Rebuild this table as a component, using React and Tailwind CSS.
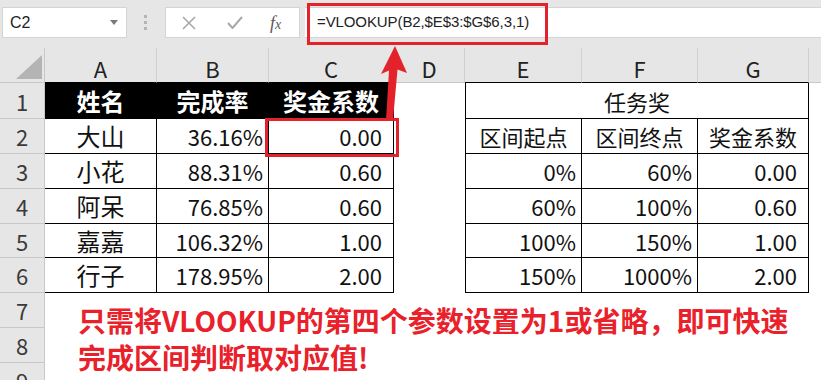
const COLS = [
  { key: 'A', w: 'w-[112px]' },
  { key: 'B', w: 'w-[112px]' },
  { key: 'C', w: 'w-[125px]' },
  { key: 'D', w: 'w-[71px]' },
  { key: 'E', w: 'w-[117px]' },
  { key: 'F', w: 'w-[116px]' },
  { key: 'G', w: 'w-[111px]' },
];

const HEIGHTS = ['h-[36px]', 'h-[35px]', 'h-[35px]', 'h-[35px]', 'h-[34px]', 'h-[35px]', 'h-[35px]', 'h-[35px]', 'h-[35px]'];

const people = [
  ['大山', '36.16%', '0.00'],
  ['小花', '88.31%', '0.60'],
  ['阿呆', '76.85%', '0.60'],
  ['嘉嘉', '106.32%', '1.00'],
  ['行子', '178.95%', '2.00'],
];

const bands = [
  ['0%', '60%', '0.00'],
  ['60%', '100%', '0.60'],
  ['100%', '150%', '1.00'],
  ['150%', '1000%', '2.00'],
];

function RowHead({ n, h }) {
  return (
    <div className={`${h} w-[45px] shrink-0 bg-[#e6e6e6] border-r border-b border-[#c8c8c8] flex items-center justify-center text-[22px] text-[#3a3a3a] leading-none`}>
      {n}
    </div>
  );
}

function Cell({ w, children, align = 'center', pad = '', extra = '' }) {
  const justify = align === 'right' ? 'justify-end' : 'justify-center';
  return (
    <div className={`${w} shrink-0 h-full flex items-center ${justify} ${pad} border-r border-b border-black leading-none ${extra}`}>
      {children}
    </div>
  );
}

function Blank({ w }) {
  return <div className={`${w} shrink-0 h-full`} />;
}

export default function App() {
  return (
    <div className="w-[821px] h-[380px] relative overflow-hidden bg-white" style={{ fontFamily: '"Noto Sans CJK SC", "Noto Sans", sans-serif' }}>
      {/* toolbar */}
      <div className="h-[48px] bg-[#e6e6e6] flex items-start pt-[7px]">
        <div className="ml-[2px] w-[125px] h-[31px] bg-white border border-[#d4d4d4] flex items-center justify-between pl-[7px] pr-[8px]">
          <span className="text-[16px] text-[#222] font-['Liberation_Sans',sans-serif]">C2</span>
          <svg width="8" height="5" viewBox="0 0 8 5"><path d="M0 0h8L4 5z" fill="#7a7a7a" /></svg>
        </div>
        <div className="ml-[17px] mt-[8px] flex flex-col gap-[3px]">
          <div className="w-[3px] h-[3px] bg-[#b4b4b4]" />
          <div className="w-[3px] h-[3px] bg-[#b4b4b4]" />
          <div className="w-[3px] h-[3px] bg-[#b4b4b4]" />
        </div>
        <div className="ml-[18px] w-[135px] h-[31px] bg-white border border-[#d4d4d4] flex items-center">
          <svg className="ml-[16px]" width="14" height="14" viewBox="0 0 14 14">
            <path d="M1 1L13 13M13 1L1 13" stroke="#a8a8a8" strokeWidth="1.6" />
          </svg>
          <svg className="ml-[31px]" width="16" height="13" viewBox="0 0 16 13">
            <path d="M1 7l4.5 5L15 1" stroke="#a8a8a8" strokeWidth="2" fill="none" />
          </svg>
          <span className="ml-[27px] text-[18px] italic text-[#5a5a5a] font-['Liberation_Serif',serif] leading-none">f<span className="text-[14px]">x</span></span>
        </div>
        <div className="ml-[5px] flex-1 h-[31px] bg-white border-y border-[#d4d4d4] flex items-center pl-[12px]">
          <span className="text-[15px] text-[#222] font-['Liberation_Sans',sans-serif] tracking-[-0.1px]">=VLOOKUP(B2,$E$3:$G$6,3,1)</span>
        </div>
      </div>

      {/* column headers */}
      <div className="h-[35px] flex bg-[#e6e6e6]">
        <div className="w-[45px] shrink-0 h-full border-r border-b border-[#c8c8c8] flex items-end justify-end pb-[3px] pr-[2px]">
          <svg width="26" height="24" viewBox="0 0 26 24"><path d="M26 0V24H0z" fill="#b4b4b4" /></svg>
        </div>
        {COLS.map((c) => (
          <div
            key={c.key}
            className={`${c.w} shrink-0 h-full pt-[5px] border-r border-b border-r-[#d0d0d0] ${c.key === 'D' ? 'border-b-[#c8c8c8]' : 'border-b-black'} flex items-center justify-center text-[22px] text-[#222] leading-none`}
          >
            {c.key}
          </div>
        ))}
        <div className="flex-1 h-full border-b border-[#c8c8c8]" />
      </div>

      {/* row 1 */}
      <div className={`${HEIGHTS[0]} flex`}>
        <RowHead n={1} h="h-full" />
        <Cell w="w-[112px]" extra="bg-black text-white font-bold text-[24px]">姓名</Cell>
        <Cell w="w-[112px]" extra="bg-black text-white font-bold text-[24px]">完成率</Cell>
        <Cell w="w-[125px]" extra="bg-black text-white font-bold text-[24px]">奖金系数</Cell>
        <Blank w="w-[71px]" />
        <Cell w="w-[344px]" extra="border-l text-[22px] text-[#111]">任务奖</Cell>
      </div>

      {/* row 2 */}
      <div className={`${HEIGHTS[1]} flex`}>
        <RowHead n={2} h="h-full" />
        <Cell w="w-[112px]" extra="text-[24px] text-[#111]">{people[0][0]}</Cell>
        <Cell w="w-[112px]" align="right" pad="pr-[5px]" extra="text-[22px] text-[#111]">{people[0][1]}</Cell>
        <Cell w="w-[125px]" align="right" pad="pr-[11px]" extra="text-[22px] text-[#111]">{people[0][2]}</Cell>
        <Blank w="w-[71px]" />
        <Cell w="w-[117px]" extra="border-l text-[22px] text-[#111]">区间起点</Cell>
        <Cell w="w-[116px]" extra="text-[22px] text-[#111]">区间终点</Cell>
        <Cell w="w-[111px]" extra="text-[22px] text-[#111]">奖金系数</Cell>
      </div>

      {/* rows 3-6 */}
      {bands.map((b, i) => {
        const p = people[i + 1];
        return (
          <div key={i} className={`${HEIGHTS[i + 2]} flex`}>
            <RowHead n={i + 3} h="h-full" />
            <Cell w="w-[112px]" extra="text-[24px] text-[#111]">{p[0]}</Cell>
            <Cell w="w-[112px]" align="right" pad="pr-[5px]" extra="text-[22px] text-[#111]">{p[1]}</Cell>
            <Cell w="w-[125px]" align="right" pad="pr-[11px]" extra="text-[22px] text-[#111]">{p[2]}</Cell>
            <Blank w="w-[71px]" />
            <Cell w="w-[117px]" align="right" pad="pr-[5px]" extra="border-l text-[22px] text-[#111]">{b[0]}</Cell>
            <Cell w="w-[116px]" align="right" pad="pr-[5px]" extra="text-[22px] text-[#111]">{b[1]}</Cell>
            <Cell w="w-[111px]" align="right" pad="pr-[11px]" extra="text-[22px] text-[#111]">{b[2]}</Cell>
          </div>
        );
      })}

      {/* rows 7-9 */}
      {[7, 8, 9].map((n) => (
        <div key={n} className={`${HEIGHTS[n - 1]} flex`}>
          <RowHead n={n} h="h-full" />
        </div>
      ))}

      {/* annotation: formula outline */}
      <div className="absolute left-[307px] top-[3px] w-[241px] h-[42px] border-[3px] border-[#e4222b]" />
      {/* annotation: C2 outline */}
      <div className="absolute left-[265px] top-[118px] w-[134px] h-[39px] border-[3px] border-[#e4222b]" />
      {/* annotation: arrow */}
      <svg className="absolute left-[370px] top-[40px]" width="45" height="82" viewBox="370 40 45 82">
        <path d="M395 46L407 73L397.5 69.5L393 120L386 120L389 70.5L381 74Z" fill="#e4222b" />
      </svg>

      {/* annotation: note */}
      <div className="absolute left-[78px] top-[302px] text-[28px] font-bold leading-[37px] text-[#e8212b] whitespace-nowrap">
        <div>只需将VLOOKUP的第四个参数设置为1或省略，即可快速</div>
        <div>完成区间判断取对应值!</div>
      </div>
    </div>
  );
}
